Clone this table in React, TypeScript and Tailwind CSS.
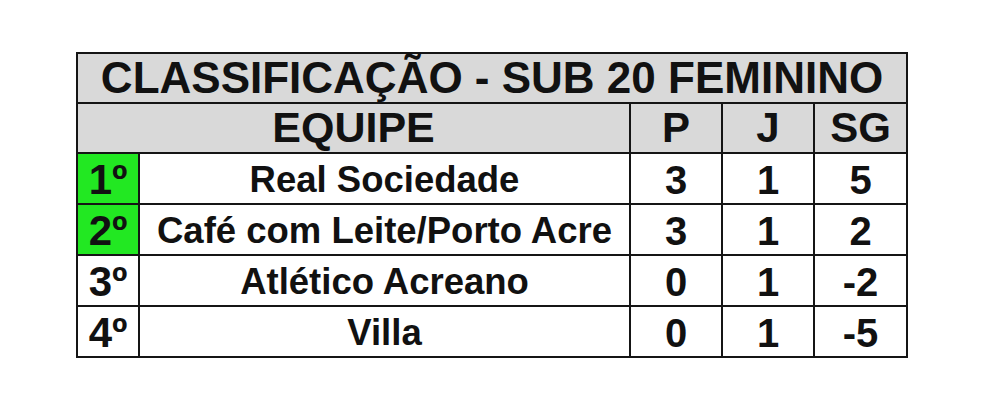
const rows = [
  { pos: "1º", team: "Real Sociedade", p: "3", j: "1", sg: "5", top: true },
  { pos: "2º", team: "Café com Leite/Porto Acre", p: "3", j: "1", sg: "2", top: true },
  { pos: "3º", team: "Atlético Acreano", p: "0", j: "1", sg: "-2", top: false },
  { pos: "4º", team: "Villa", p: "0", j: "1", sg: "-5", top: false },
];

const cell = "flex items-center justify-center leading-none";

export default function App() {
  return (
    <div className="flex h-[409px] w-[984px] items-center justify-center bg-white font-['Liberation_Sans',Arial,sans-serif] font-bold text-[#111]">
      <div className="grid w-[832px] grid-cols-[60px_489px_90px_90px_91px] grid-rows-[48px_48px_49px_49px_49px_49px] gap-[2px] border-2 border-[#151515] bg-[#151515]">
        <div className={`${cell} col-span-5 bg-[#d9d9d9] text-[44px]`}>
          CLASSIFICAÇÃO - SUB 20 FEMININO
        </div>
        <div className={`${cell} col-span-2 bg-[#d9d9d9] text-[43px]`}>EQUIPE</div>
        <div className={`${cell} bg-[#d9d9d9] text-[42px]`}>P</div>
        <div className={`${cell} bg-[#d9d9d9] text-[42px]`}>J</div>
        <div className={`${cell} bg-[#d9d9d9] text-[42px]`}>SG</div>
        {rows.map((r) => (
          <div key={r.pos} className="contents">
            <div className={`${cell} pt-[3px] text-[42px] ${r.top ? "bg-[#22e822]" : "bg-white"}`}>
              {r.pos}
            </div>
            <div className={`${cell} bg-white pt-[5px] text-[36.5px]`}>{r.team}</div>
            <div className={`${cell} bg-white pt-[3px] text-[40px]`}>{r.p}</div>
            <div className={`${cell} bg-white pt-[3px] text-[40px]`}>{r.j}</div>
            <div className={`${cell} bg-white pt-[3px] text-[40px]`}>{r.sg}</div>
          </div>
        ))}
      </div>
    </div>
  );
}
